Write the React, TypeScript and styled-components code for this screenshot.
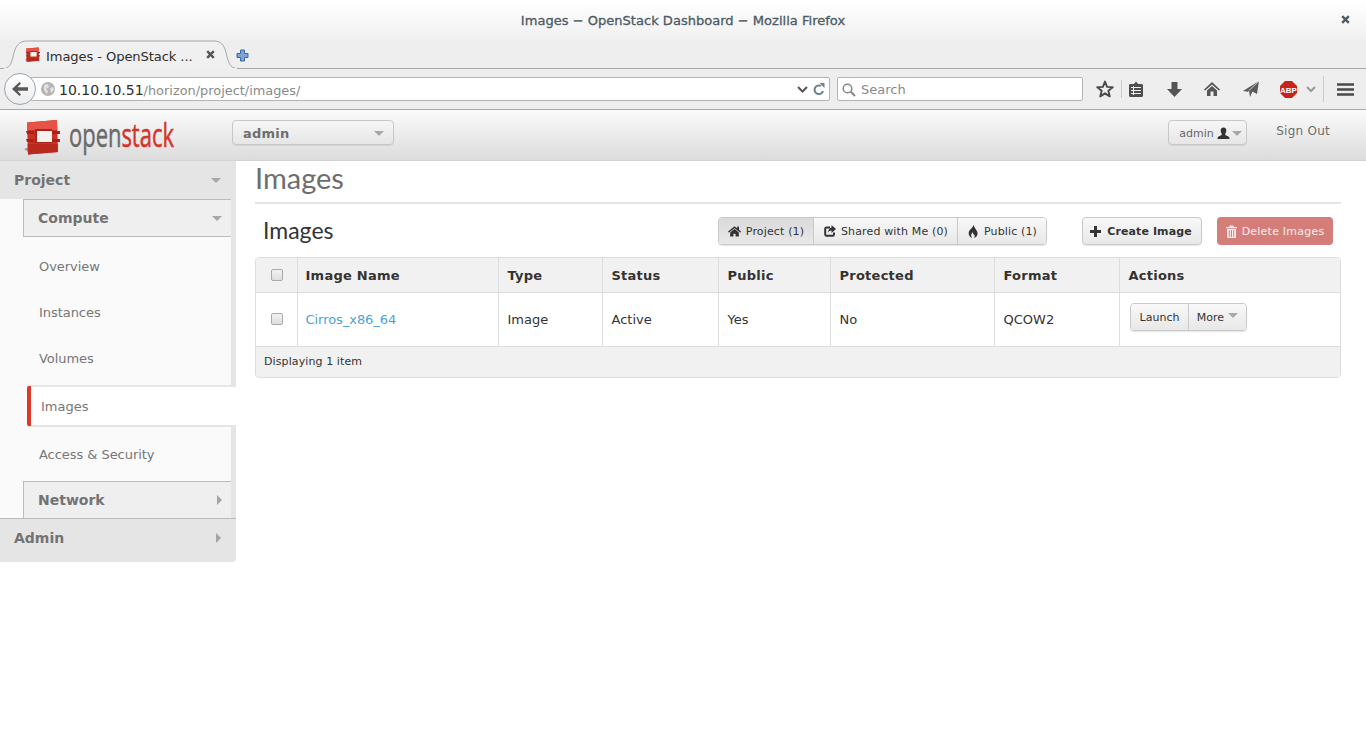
import React from "react";
import styled, { createGlobalStyle } from "styled-components";
import { FaHome } from "react-icons/fa";

const Global = createGlobalStyle`
  html, body { margin: 0; padding: 0; background: #fff; }
  body { font-family: "DejaVu Sans", sans-serif; width: 1366px; height: 741px; overflow: hidden; }
  * { box-sizing: border-box; }
`;

const Page = styled.div`display: flex; flex-direction: column; width: 1366px; height: 741px;`;

const TitleBar = styled.div`
  height: 40px; display: flex; align-items: center; justify-content: center;
  position: relative; background: linear-gradient(#ffffff, #f0f0f0); color: #4c5a63;
`;
const TitleText = styled.span`font-size: 13.05px; -webkit-text-stroke: 0.3px #4c5a63;`;
const CloseWin = styled.span`position: absolute; right: 16px; top: 15px; display: flex;`;

const TabBar = styled.div`
  height: 29px; background: #eeeeee; position: relative; display: flex; align-items: flex-end;
  border-bottom: 1px solid #a8a8a8;
`;
const TabShape = styled.svg`position: absolute; left: 0; top: 0;`;
const Tab = styled.div`
  position: relative; height: 28px; margin-left: 25px; width: 194px; display: flex; align-items: center;
  font-size: 13px; color: #2e2e2e; gap: 6px;
`;
const TabTitle = styled.span`flex: 1; min-width: 0; white-space: nowrap; font-size: 13.1px; letter-spacing: -0.1px; margin-bottom: -4px;`;
const TabClose = styled.span`display: flex; margin-right: 4px;`;
const NewTab = styled.span`position: relative; margin-left: 17px; margin-bottom: 6px; display: flex;`;

const NavBar = styled.div`
  height: 41px; background: #eeeeee; display: flex; align-items: center; position: relative;
  border-bottom: 1px solid #a8a8a8; padding-left: 31px;
`;
const BackBtn = styled.div`
  position: absolute; left: 4px; top: 4px; width: 32px; height: 32px; border-radius: 50%;
  background: linear-gradient(#ffffff, #ececec); border: 1px solid #97a5b4; z-index: 2;
  display: flex; align-items: center; justify-content: center;
`;
const UrlBox = styled.div`
  width: 799px; height: 24px; background: #fff; border: 1px solid #b4b4b4; border-radius: 0 2px 2px 0;
  display: flex; align-items: center; font-size: 14px; color: #2e2e2e; padding-left: 9px; white-space: nowrap;
`;
const UrlHost = styled.span`margin-left: 4px; font-size: 14px; padding-top: 2px;`;
const UrlPath = styled.span`color: #8a8a8a; font-size: 12.9px; padding-top: 2px;`;
const UrlEnd = styled.span`margin-left: auto; display: flex; align-items: center; gap: 5px; padding-right: 4px;`;
const SearchBox = styled.div`
  width: 246px; height: 24px; margin-left: 7px; background: #fff; border: 1px solid #b4b4b4; border-radius: 2px;
  display: flex; align-items: center; gap: 5px; padding: 1px 0 0 4px; font-size: 13px; color: #8a8a8a;
`;
const Tools = styled.div`display: flex; align-items: center; height: 100%; flex: 1; padding-left: 6px;`;
const ToolSlot = styled.span<{ $w: number }>`
  width: ${(p) => p.$w}px; display: flex; align-items: center; justify-content: center; height: 100%;
`;
const ToolSep = styled.span<{ $h: number }>`width: 1px; height: ${(p) => p.$h}px; background: #c8ccd0;`;

const Header = styled.header`
  height: 51px; display: flex; align-items: flex-start; position: relative;
  background: linear-gradient(#fbfbfb, #dcdcdc); border-bottom: 1px solid #d2d2d2;
`;
const Logo = styled.div`width: 232px; display: flex; align-items: center; padding-left: 24px; padding-top: 9px; gap: 9px;`;
const LogoText = styled.span`
  font-family: "Open Sans", sans-serif; font-size: 33px; line-height: 34px; color: #6a6a6a;
  transform: scaleX(0.665); transform-origin: left; margin-top: -5px; -webkit-text-stroke: 0.5px currentColor;
`;
const LogoRed = styled.span`color: #d6342a;`;
const Picker = styled.div`
  width: 162px; height: 25px; margin-top: 10px; border: 1px solid #c8c8c8; border-radius: 4px;
  background: linear-gradient(#f6f6f6, #e6e6e6); box-shadow: 0 1px 1px rgba(0,0,0,.08);
  display: flex; align-items: center; justify-content: space-between; padding: 1px 9px 0 10px;
  font-size: 13px; font-weight: bold; color: #6e6e6e; letter-spacing: .2px;
`;
const Caret = styled.span<{ $c?: string }>`
  display: inline-block; width: 0; height: 0; border-style: solid;
  border-width: 5px 5px 0; border-color: ${(p) => p.$c ?? "#a8a8a8"} transparent transparent;
`;
const CaretRight = styled.span`
  display: inline-block; width: 0; height: 0; border-style: solid;
  border-width: 5px 0 5px 5px; border-color: transparent transparent transparent #a4a4a4;
`;
const HeaderRight = styled.div`margin-left: auto; display: flex; align-items: flex-start; padding-right: 36px;`;
const UserBtn = styled.div`
  width: 79px; height: 25px; margin-top: 10px; border: 1px solid #c8c8c8; border-radius: 4px;
  background: linear-gradient(#f6f6f6, #e6e6e6); box-shadow: 0 1px 1px rgba(0,0,0,.08);
  display: flex; align-items: center; padding: 1px 0 0 10px; gap: 2px; font-size: 11px; color: #666;
`;
const SignOut = styled.a`margin-left: 29px; margin-top: 14px; font-size: 12px; color: #6e6e6e; letter-spacing: .25px;`;

const Body = styled.div`flex: 1; display: flex; align-items: flex-start;`;
const Sidebar = styled.nav`
  width: 236px; display: flex; flex-direction: column; background: #fafafa;
  border-radius: 0 0 4px 0; overflow: hidden;
`;
const TopGroup = styled.div<{ $last?: boolean }>`
  height: ${(p) => (p.$last ? 44 : 38)}px; background: #e5e5e5; display: flex; align-items: center;
  justify-content: space-between; padding: ${(p) => (p.$last ? "0 15px 6px 14px" : "0 15px 0 14px")};
  font-size: 14px; font-weight: bold; color: #737373;
  ${(p) => p.$last && "border-top: 1px solid #bcbcbc;"}
`;
const SubWrap = styled.div`display: flex; flex-direction: column; border-right: 5px solid #e5e5e5;`;
const SubGroup = styled.div<{ $open?: boolean }>`
  margin-left: 23px; height: ${(p) => (p.$open ? 38 : 37)}px; background: #efefef; border: 1px solid #bcbcbc; border-right: 0;
  ${(p) => !p.$open && "border-bottom: 0;"}
  display: flex; align-items: center; justify-content: space-between; padding: 0 9px 0 14px;
  font-size: 14px; font-weight: bold; color: #737373;
`;
const NavList = styled.div`display: flex; flex-direction: column; padding-top: 6px;`;
const NavItem = styled.a`
  height: 46px; display: flex; align-items: center; padding-left: 39px;
  font-size: 13px; color: #777; letter-spacing: -0.05px;
`;
const ActiveItem = styled.a`
  height: 42px; margin: 4px -5px 0 27px; display: flex; align-items: center; padding-left: 14px;
  background: #fff; border-top: 2px solid #e5e5e5; border-bottom: 2px solid #e5e5e5;
  font-size: 13px; color: #777; position: relative;
  &::before {
    content: ""; position: absolute; left: 0; top: -1px; bottom: -1px; width: 4px;
    background: #dc3a26; border-radius: 2px 0 0 2px;
  }
`;
const AfterActive = styled(NavItem)`height: 54px;`;

const Main = styled.main`flex: 1; padding: 0 25px 0 19px; min-width: 0;`;
const PageTitle = styled.h1`
  margin: 0; height: 43px; border-bottom: 2px solid #e5e5e5; font: 400 29px/34px "Lato", sans-serif; color: #6e6e6e;
`;
const TableBar = styled.div`height: 53px; display: flex; align-items: center; padding: 0 8px 1px;`;
const SubTitle = styled.h2`margin: 0; font: 400 23px/27px "Lato", sans-serif; color: #333; flex: 1;`;
const ButtonGroup = styled.div`
  display: flex; height: 28px; margin-top: 1px; border: 1px solid #c9c9c9; border-radius: 4px; box-shadow: 0 1px 1px rgba(0,0,0,.1); overflow: hidden;
`;
const GroupBtn = styled.div<{ $active?: boolean; $w: number; $nudge?: number }>`
  width: ${(p) => p.$w}px; display: flex; align-items: center; justify-content: center; gap: 5px;
  padding: 1px 0 0 ${(p) => p.$nudge ?? 0}px;
  font-size: 11px; letter-spacing: .15px; color: #333; border-right: 1px solid #c9c9c9;
  background: ${(p) => (p.$active ? "linear-gradient(#dadada, #e8e8e8)" : "linear-gradient(#f8f8f8, #e8e8e8)")};
  &:last-child { border-right: 0; }
`;
const CreateBtn = styled.div`
  width: 120px; height: 28px; margin: 1px 0 0 35px; border: 1px solid #c9c9c9; border-radius: 4px; padding: 1px 2px 0 0;
  background: linear-gradient(#f8f8f8, #e8e8e8); box-shadow: 0 1px 1px rgba(0,0,0,.1);
  display: flex; align-items: center; justify-content: center; gap: 6px; font-size: 11px; letter-spacing: .1px; font-weight: bold; color: #333;
`;
const DeleteBtn = styled.div`
  width: 116px; height: 28px; margin: 1px 0 0 15px; border-radius: 4px; background: #d47d79; padding-top: 1px;
  display: flex; align-items: center; justify-content: center; gap: 5px; font-size: 11px; letter-spacing: .22px; color: #fbeeee;
`;

const TableFrame = styled.div`border: 1px solid #dddddd; border-radius: 4px; overflow: hidden; width: 1086px;`;
const Table = styled.table`border-collapse: collapse; width: 100%; table-layout: fixed;`;
const Th = styled.th<{ $w?: number; $pad?: number }>`
  ${(p) => p.$w && `width: ${p.$w}px;`} height: 34px; background: #f1f1f1; text-align: left; padding: 2px 0 0 ${(p) => p.$pad ?? 9}px;
  font-size: 13px; font-weight: bold; color: #333; border-left: 1px solid #ddd; border-bottom: 1px solid #ddd;
  letter-spacing: .25px; &:first-child { border-left: 0; }
`;
const Td = styled.td<{ $pad?: number }>`
  height: 54px; padding: 0 0 0 ${(p) => p.$pad ?? 9}px; font-size: 13px; color: #333; border-left: 1px solid #ddd;
  &:first-child { border-left: 0; }
`;
const CheckCell = styled.div<{ $up?: boolean }>`display: flex; justify-content: center; padding-right: 8px; ${(p) => p.$up && "margin-top: -2px;"}`;
const Check = styled.span`
  width: 12px; height: 12px; border: 1px solid #a9a9a9; border-radius: 2px; background: linear-gradient(#f2f2f2, #dedede);
`;
const NameLink = styled.a`color: #4aa3d8; font-size: 13px; letter-spacing: -0.05px;`;
const Actions = styled.div`display: flex; height: 28px; margin: -4px 0 0 1px; width: 117px; border: 1px solid #c9c9c9; border-radius: 4px; box-shadow: 0 1px 1px rgba(0,0,0,.1); overflow: hidden;`;
const ActionBtn = styled.div<{ $w: number }>`
  width: ${(p) => p.$w}px; display: flex; align-items: center; justify-content: center; gap: 4px; font-size: 11px; color: #333;
  background: linear-gradient(#f8f8f8, #e8e8e8); border-right: 1px solid #c9c9c9;
  &:last-child { border-right: 0; }
`;
const RaisedCaret = styled(Caret)`margin-top: -3px;`;
const Foot = styled.td`
  height: 31px; background: #f1f1f1; border-top: 1px solid #ddd; padding: 0 8px; font-size: 11px; letter-spacing: .1px; color: #333;
`;

const GlyphX = ({ c = "#4c5a63", s = 9 }: { c?: string; s?: number }) => (
  <svg width={s} height={s} viewBox="0 0 9 9"><path d="M1.200 1.200 7.800 7.800M7.800 1.200 1.200 7.800" stroke={c} strokeWidth="2.400" /></svg>
);

const Cube = ({ s }: { s: number }) => (
  <svg width={s} height={s} viewBox="0 0 36 36" style={{ flexShrink: 0 }}>
    <path d="M0 30 6 34V28Z" fill="#9a9a9a" />
    <path d="M3 3.500 33 1 34 33 4 35.500Z" fill="#cb3125" />
    <path d="M3 3.500 33 1 33.300 11H3Z" fill="#e65346" />
    <path d="M3.600 25 33.700 25 34 33 4 35.500Z" fill="#b9291e" />
    <path d="M2 12H10V15H3ZM2 20H10V23H3ZM27 12H36V15H27ZM27 20H36V23H27Z" fill="#a5241a" />
    <rect x="11" y="10" width="17" height="14" fill="#a92419" />
    <rect x="13" y="12" width="15" height="11" fill="#f5f2f0" />
  </svg>
);

const Share = () => (
  <svg width="12" height="12" viewBox="0 0 12 12">
    <path d="M6 2.500H3A1.500 1.500 0 0 0 1.200 4V9.300A1.500 1.500 0 0 0 3 10.800H8.300A1.500 1.500 0 0 0 10 9.300V7.500" fill="none" stroke="#333" strokeWidth="2" />
    <path d="M7.500 0 12 4 7.500 8V5.600C5.500 5.600 4.500 6.500 4 8 4 5 5.500 2.800 7.500 2.500Z" fill="#333" />
  </svg>
);
const Fire = () => (
  <svg width="12" height="13" viewBox="0 0 12 13">
    <path d="M6 0C6.500 2.500 3 4 2 6.500 1 9 2.500 12 5 13 3.500 10.500 4 9 6 7 5.800 9 6.500 9.300 7.500 10 8 11 7.500 12.300 7 13 9.500 12.300 11 10 10.500 7.500 10 5.500 9 5.500 9 4 8 4.500 8.200 2 6 0Z" fill="#333" />
  </svg>
);
const Plus = () => (
  <svg width="11" height="11" viewBox="0 0 11 11"><path d="M5.500 0V11M0 5.500H11" stroke="#333" strokeWidth="3" /></svg>
);
const Trash = () => (
  <svg width="11" height="13" viewBox="0 0 11 13">
    <path d="M0 2H3.500V0.500H7.500V2H11V3.200H0Z" fill="#fbeeee" />
    <path d="M1 4H10V12A1 1 0 0 1 9 13H2A1 1 0 0 1 1 12Z" fill="#fbeeee" />
    <path d="M3.300 5V12M5.500 5V12M7.700 5V12" stroke="#d47d79" strokeWidth="1" />
  </svg>
);
const User = () => (
  <svg width="13" height="12" viewBox="0 0 12 12" style={{ marginLeft: 1 }}>
    <path d="M6 .5C4 .5 3 2 3.200 4 3.300 5 3.700 6 4.300 6.800 4.500 8 3.500 8.500 1.500 9.200 .5 9.600 0 10.500 0 12H12C12 10.500 11.500 9.600 10.500 9.200 8.500 8.500 7.500 8 7.700 6.800 8.300 6 8.700 5 8.800 4 9 2 8 .5 6 .5Z" fill="#333" />
  </svg>
);

export default function App() {
  return (
    <Page>
      <Global />
      <TitleBar>
        <TitleText>Images − OpenStack Dashboard − Mozilla Firefox</TitleText>
        <CloseWin><GlyphX /></CloseWin>
      </TitleBar>
      <TabBar>
        <TabShape width="260" height="29" viewBox="0 0 260 29">
          <path d="M0 28.500H3C9 28.500 11 25 13 17 15 6 19 1 27 1H214C222 1 225 6 227 17 229 25 232 28.500 238 28.500" fill="#f0f0f0" stroke="#a8a8a8" />
          <path d="M4 29H237" stroke="#f0f0f0" strokeWidth="2" />
        </TabShape>
        <Tab>
          <Cube s={15} />
          <TabTitle>Images - OpenStack ...</TabTitle>
          <TabClose><GlyphX c="#555" /></TabClose>
        </Tab>
        <NewTab>
          <svg width="13" height="13" viewBox="0 0 13 13"><path d="M4.500 1h4v3.500H12v4H8.500V12h-4V8.500H1v-4h3.500z" fill="#7fa3cf" stroke="#3d6aa5" strokeWidth="1" /></svg>
        </NewTab>
      </TabBar>
      <NavBar>
        <BackBtn>
          <svg width="16" height="14" viewBox="0 0 16 14"><path d="M7.500 0 9 1.500 5.500 5.200H16v3.600H5.500L9 12.500 7.500 14 0 7z" fill="#58595b" /></svg>
        </BackBtn>
        <UrlBox>
          <svg width="14" height="14" viewBox="0 0 14 14" style={{ flexShrink: 0 }}><circle cx="7" cy="7" r="7" fill="#b5b5b5" /><path d="M3 3 7 2 8 5 5 7 7 9 6 12 3 8ZM9 6 12 5 13 8 10 11Z" fill="#e2e2e2" /></svg>
          <UrlHost>10.10.10.51</UrlHost>
          <UrlPath>/horizon/project/images/</UrlPath>
          <UrlEnd>
            <svg width="11" height="7" viewBox="0 0 11 7"><path d="M1 1 5.500 5.500 10 1" fill="none" stroke="#555" strokeWidth="2" /></svg>
            <svg width="12" height="13" viewBox="0 0 12 13"><path d="M10 8A4.300 4.300 0 1 1 8 3" fill="none" stroke="#6d7f93" strokeWidth="2" /><path d="M6.500 0 11.500 0V5Z" fill="#6d7f93" /></svg>
          </UrlEnd>
        </UrlBox>
        <SearchBox>
          <svg width="14" height="14" viewBox="0 0 14 14"><circle cx="5.500" cy="5.500" r="4.300" fill="none" stroke="#888" strokeWidth="1.500" /><path d="M8.800 8.800 13 13" stroke="#888" strokeWidth="2" /></svg>
          Search
        </SearchBox>
        <Tools>
          <ToolSlot $w={32}>
            <svg width="18" height="18" viewBox="0 0 17 17"><path d="M8.500 1.500 10.500 6.500 15.800 6.800 11.700 10.200 13 15.500 8.500 12.600 4 15.500 5.300 10.200 1.200 6.800 6.500 6.500Z" fill="none" stroke="#4a4a4a" strokeWidth="1.800" strokeLinejoin="round" /></svg>
          </ToolSlot>
          <ToolSep $h={18} />
          <ToolSlot $w={28}>
            <svg width="14" height="16" viewBox="0 0 14 16"><path d="M2 3H5L7 .5 9 3H12.500A1.500 1.500 0 0 1 14 4.500V14.500A1.500 1.500 0 0 1 12.500 16H1.500A1.500 1.500 0 0 1 0 14.500V4.500A1.500 1.500 0 0 1 2 3Z" fill="#4d4d4d" /><path d="M2 6.500H12M2 9.500H12M2 12.500H12M4.500 5V14" stroke="#eee" strokeWidth="1" fill="none" /></svg>
          </ToolSlot>
          <ToolSlot $w={48}>
            <svg width="15" height="15" viewBox="0 0 15 15"><path d="M4.500 0H10.500V7H15L7.500 15 0 7H4.500Z" fill="#555" /></svg>
          </ToolSlot>
          <ToolSlot $w={28}>
            <svg width="16" height="14" viewBox="0 0 16 14"><path d="M8 0 16 7.500 14.800 8.500 8 2.500 1.200 8.500 0 7.500Z" fill="#555" /><path d="M3 8.500 8 4 13 8.500V14H9.500V9.500H6.500V14H3Z" fill="#555" /></svg>
          </ToolSlot>
          <ToolSlot $w={50}>
            <svg width="16" height="16" viewBox="0 0 16 16"><path d="M16 0 14 13 9.500 10.500 7 16 6 9.500Z" fill="#5a5a5a" /><path d="M16 0 0 10 5 10.800Z" fill="#5a5a5a" /><path d="M16 0 6 9.500" stroke="#eee" strokeWidth=".7" /></svg>
          </ToolSlot>
          <ToolSlot $w={24}>
            <svg width="17" height="17" viewBox="0 0 17 17"><path d="M5 0H12L17 5V12L12 17H5L0 12V5Z" fill="#c8231a" /><text x="8.500" y="11.500" textAnchor="middle" fontSize="8" fontWeight="bold" fill="#fff" fontFamily="Liberation Sans">ABP</text></svg>
          </ToolSlot>
          <ToolSlot $w={21}>
            <svg width="10" height="7" viewBox="0 0 10 7"><path d="M1 1 5 5 9 1" fill="none" stroke="#999" strokeWidth="2" /></svg>
          </ToolSlot>
          <ToolSlot $w={2} />
          <ToolSep $h={26} />
          <ToolSlot $w={42}>
            <svg width="17" height="13" viewBox="0 0 17 13"><path d="M0 1.500H17M0 6.500H17M0 11.500H17" stroke="#4a4a4a" strokeWidth="2.500" /></svg>
          </ToolSlot>
        </Tools>
      </NavBar>
      <Header>
        <Logo>
          <Cube s={36} />
          <LogoText>open<LogoRed>stack</LogoRed></LogoText>
        </Logo>
        <Picker>admin<Caret /></Picker>
        <HeaderRight>
          <UserBtn>admin <User /><Caret /></UserBtn>
          <SignOut>Sign Out</SignOut>
        </HeaderRight>
      </Header>
      <Body>
        <Sidebar>
          <TopGroup>Project<Caret /></TopGroup>
          <SubWrap>
            <SubGroup $open>Compute<Caret /></SubGroup>
            <NavList>
              <NavItem>Overview</NavItem>
              <NavItem>Instances</NavItem>
              <NavItem>Volumes</NavItem>
              <ActiveItem>Images</ActiveItem>
              <AfterActive>Access &amp; Security</AfterActive>
            </NavList>
            <SubGroup>Network<CaretRight /></SubGroup>
          </SubWrap>
          <TopGroup $last>Admin<CaretRight /></TopGroup>
        </Sidebar>
        <Main>
          <PageTitle>Images</PageTitle>
          <TableBar>
            <SubTitle>Images</SubTitle>
            <ButtonGroup>
              <GroupBtn $active $w={95}><FaHome size={13} />Project (1)</GroupBtn>
              <GroupBtn $w={144} $nudge={1}><Share />Shared with Me (0)</GroupBtn>
              <GroupBtn $w={88}><Fire />Public (1)</GroupBtn>
            </ButtonGroup>
            <CreateBtn><Plus />Create Image</CreateBtn>
            <DeleteBtn><Trash />Delete Images</DeleteBtn>
          </TableBar>
          <TableFrame>
            <Table>
              <thead>
                <tr>
                  <Th $w={41}><CheckCell $up><Check /></CheckCell></Th>
                  <Th $w={201} $pad={8}>Image Name</Th>
                  <Th $w={104}>Type</Th>
                  <Th $w={116}>Status</Th>
                  <Th $w={112}>Public</Th>
                  <Th $w={164}>Protected</Th>
                  <Th $w={125}>Format</Th>
                  <Th>Actions</Th>
                </tr>
              </thead>
              <tbody>
                <tr>
                  <Td><CheckCell><Check /></CheckCell></Td>
                  <Td $pad={8}><NameLink>Cirros_x86_64</NameLink></Td>
                  <Td>Image</Td>
                  <Td>Active</Td>
                  <Td>Yes</Td>
                  <Td>No</Td>
                  <Td>QCOW2</Td>
                  <Td>
                    <Actions>
                      <ActionBtn $w={60}>Launch</ActionBtn>
                      <ActionBtn $w={57}>More<RaisedCaret /></ActionBtn>
                    </Actions>
                  </Td>
                </tr>
              </tbody>
              <tfoot>
                <tr><Foot colSpan={8}>Displaying 1 item</Foot></tr>
              </tfoot>
            </Table>
          </TableFrame>
        </Main>
      </Body>
    </Page>
  );
}
